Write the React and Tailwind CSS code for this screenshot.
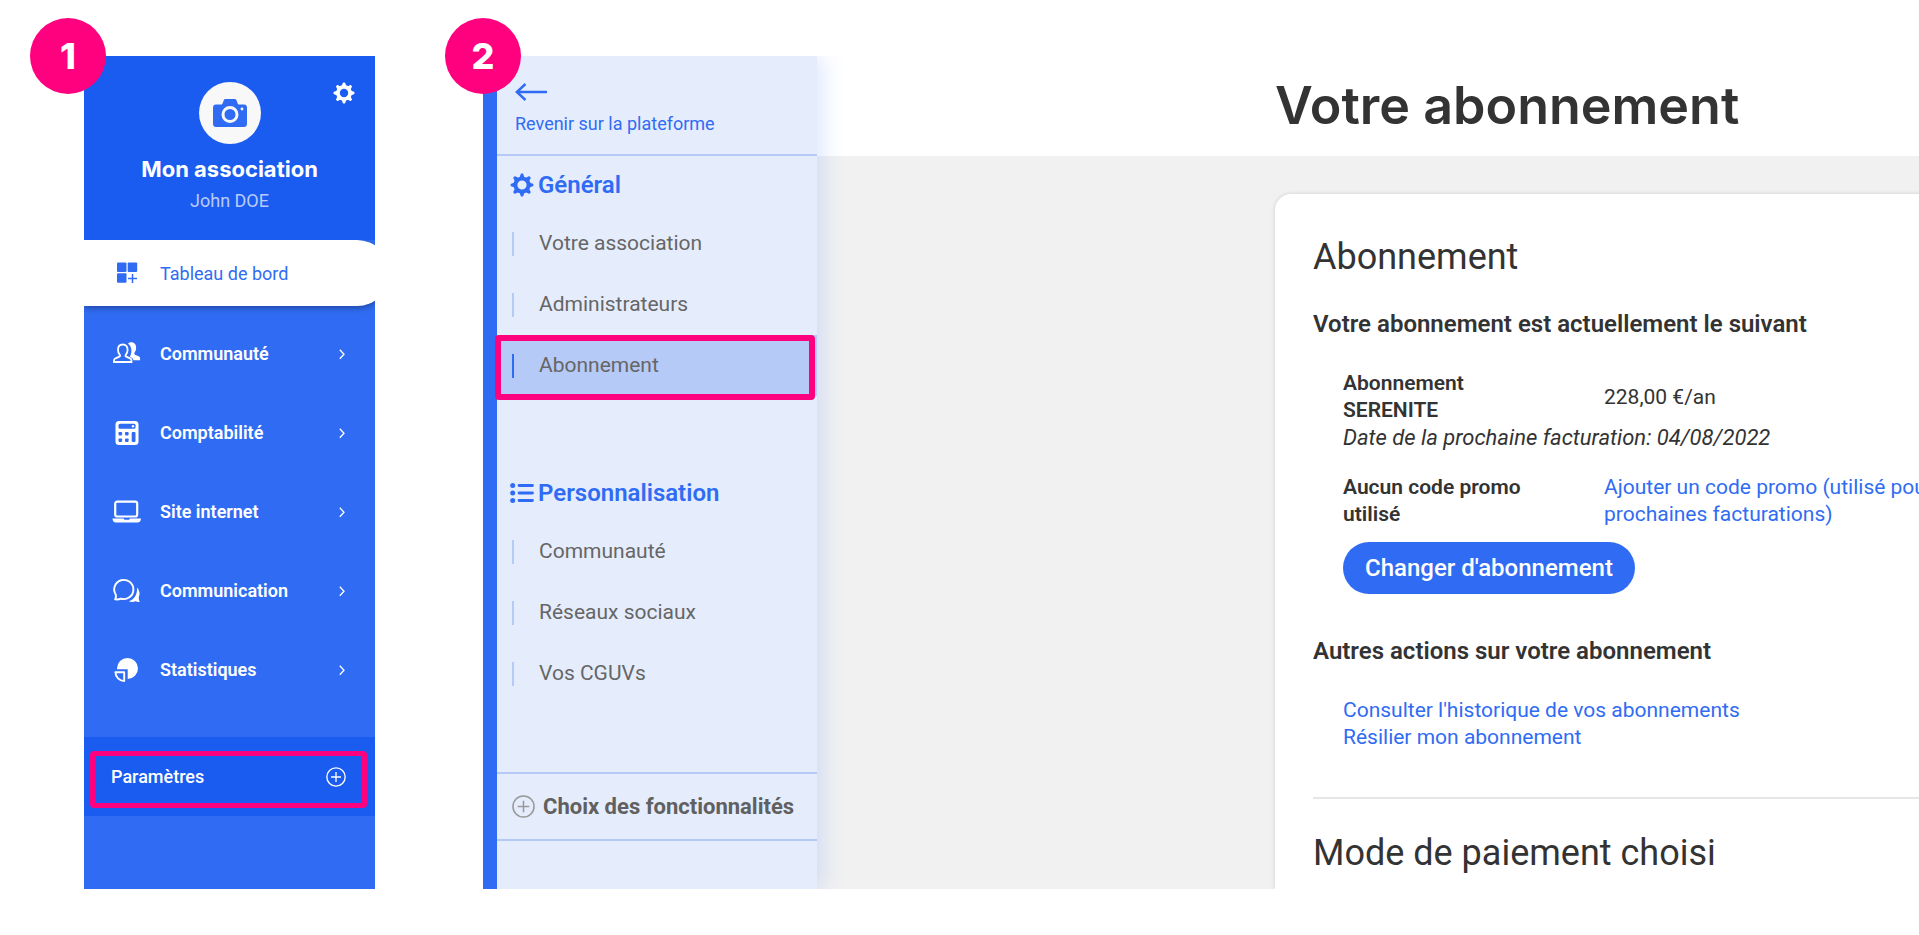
import { clsx } from "clsx";

const TEETH = [0, 45, 90, 135, 180, 225, 270, 315];

function GearIcon({ className }) {
  return (
    <svg viewBox="0 0 24 24" className={className} fill="none" stroke="currentColor" aria-hidden="true">
      <circle cx="12" cy="12" r="6.6" strokeWidth="4" />
      {TEETH.map((angle) => (
        <path
          key={angle}
          d="M10.4 4.4 11.4 1.4h1.2l1 3z"
          fill="currentColor"
          strokeWidth="1.6"
          strokeLinejoin="round"
          transform={`rotate(${angle} 12 12)`}
        />
      ))}
    </svg>
  );
}

function CameraIcon({ className }) {
  return (
    <svg viewBox="0 0 34 28" className={className} aria-hidden="true">
      <path
        fill="currentColor"
        d="M3 5.5h5.2c.8 0 1-.4 1.3-1.100l1.300-3.100C11.100.4 11.700 0 12.500 0h9.300c.8 0 1.400.4 1.700 1.200l1.200 3.200c.3.7.6 1.100 1.300 1.100h5c1.700 0 3 1.300 3 3V25c0 1.700-1.300 3-3 3H3c-1.700 0-3-1.300-3-3V8.500c0-1.700 1.300-3 3-3z"
      />
      <circle cx="17" cy="15.5" r="7" fill="none" stroke="#f8f8f8" strokeWidth="3" />
      <circle cx="29" cy="10" r="1.4" fill="#f8f8f8" />
    </svg>
  );
}

/** 30x26 frame shared by the icons of the main menu. */
function MenuIcon({ children }) {
  return (
    <svg viewBox="0 0 30 26" className="h-[26px] w-[30px] shrink-0" fill="none" stroke="currentColor" aria-hidden="true">
      {children}
    </svg>
  );
}

function DashboardIcon() {
  return (
    <MenuIcon>
      <g fill="currentColor" stroke="none">
        <rect x="5" y="2.5" width="9.5" height="9.5" rx="1" />
        <rect x="15.7" y="2.5" width="9.5" height="9.5" rx="1" />
        <rect x="5" y="13.2" width="9.5" height="9.5" rx="1" />
      </g>
      <path d="M20.5 14v9M16 18.5h9" strokeWidth="1.5" />
    </MenuIcon>
  );
}

function CommunityIcon() {
  return (
    <MenuIcon>
      <path
        d="M16 2.5c1-.9 2.100-1.200 3.200-1.200 3.200 0 4.900 2.400 4.900 5.300 0 2.200-.5 3.800-1.600 5.100-.5.7-.3 1.600.5 2l3.600 1.600c1 .5 1.500 1.200 1.500 2.300v1.600h-6.600c-.3-1.300-1-2.200-2.300-2.800l-1.500-.7c1.100-1.500 1.700-3.600 1.700-6 0-3.100-1.200-5.500-3.400-7.200z"
        fill="currentColor"
        stroke="none"
      />
      <path
        d="M10.8 3.5c-3 0-4.800 2-4.800 5.200 0 2.200.7 3.900 1.800 5.100.6.8.3 1.500-.5 1.900l-3.800 1.600c-1 .5-1.500 1.200-1.500 2.400v1.300h17.500v-1.300c0-1.200-.5-1.900-1.500-2.400l-3.700-1.600c-.9-.4-1.100-1.100-.5-1.900 1.100-1.200 1.800-2.900 1.800-5.100 0-3.200-1.800-5.200-4.800-5.200z"
        strokeWidth="1.8"
      />
    </MenuIcon>
  );
}

function AccountingIcon() {
  return (
    <MenuIcon>
      <rect x="3.5" y="1" width="23" height="24" rx="3.5" fill="currentColor" stroke="none" />
      <g fill="#306cf3" stroke="none">
        <rect x="6.5" y="3.8" width="17" height="5" rx="1.5" />
        <rect x="6.5" y="12" width="3.6" height="3.4" rx=".8" />
        <rect x="13" y="12" width="3.6" height="3.4" rx=".8" />
        <rect x="6.5" y="18.5" width="3.6" height="3.4" rx=".8" />
        <rect x="13" y="18.5" width="3.6" height="3.4" rx=".8" />
        <rect x="19.7" y="12" width="3.8" height="9.9" rx="1" />
      </g>
      <circle cx="21" cy="6.3" r="1.2" fill="currentColor" stroke="none" />
    </MenuIcon>
  );
}

function WebsiteIcon() {
  return (
    <MenuIcon>
      <rect x="3.2" y="2.7" width="22" height="14.8" rx="2" strokeWidth="2.2" />
      <path d="M.5 19.5h11l1 1.200h4.500l1-1.200h11c-.2 2.500-1.300 4-3.500 4H4c-2.200 0-3.400-1.500-3.500-4z" fill="currentColor" stroke="none" />
    </MenuIcon>
  );
}

function CommunicationIcon() {
  return (
    <MenuIcon>
      <path d="M3.2 21.3c.8-1.600.9-2.900.6-4.500a9.600 9.600 0 1 1 5 3.800c-1.700.9-3.600 1-5.600.7z" strokeWidth="1.9" strokeLinejoin="round" />
      <path
        d="M25 9.5c2.700 2.600 3.300 6.600 1.700 9.900 0 1.500.3 3.100 1 4.600-1.500.1-2.900-.2-4.200-.8-2.200.9-4.500.9-6.700.1 5.300-1.600 8.800-6.900 8.200-13.800z"
        fill="currentColor"
        stroke="none"
      />
    </MenuIcon>
  );
}

function StatsIcon() {
  return (
    <MenuIcon>
      <path d="M5 11.5A10.5 10.5 0 1 1 15.7 22V12.300H5z" fill="currentColor" stroke="none" />
      <path d="M3.4 15.300h8.800v8.800c-4.900-.2-8.600-4-8.800-8.800z" strokeWidth="1.9" strokeLinejoin="round" />
    </MenuIcon>
  );
}

function CirclePlusIcon({ className }) {
  return (
    <svg viewBox="0 0 24 24" className={className} fill="none" stroke="currentColor" strokeWidth="1.6" aria-hidden="true">
      <circle cx="12" cy="12" r="11" />
      <path d="M12 6v12M6 12h12" />
    </svg>
  );
}

function ListIcon({ className }) {
  return (
    <svg viewBox="0 0 24 22" className={className} fill="none" stroke="currentColor" strokeWidth="2.8" strokeLinecap="round" aria-hidden="true">
      <path d="M9 3.500h13.500M9 11h13.500M9 18.500h13.500" />
      <g fill="currentColor" stroke="none">
        <circle cx="2.7" cy="3.5" r="2.5" />
        <circle cx="2.7" cy="11" r="2.5" />
        <circle cx="2.7" cy="18.5" r="2.5" />
      </g>
    </svg>
  );
}

function StepBadge({ children, className }) {
  return (
    <span
      className={clsx(
        "absolute -top-[38px] z-20 flex size-[76px] items-center justify-center rounded-full bg-[#ff007f] font-['Inter',sans-serif] text-[36px] font-extrabold text-white",
        className
      )}
    >
      {children}
    </span>
  );
}

const MENU = [
  { label: "Communauté", icon: CommunityIcon },
  { label: "Comptabilité", icon: AccountingIcon },
  { label: "Site internet", icon: WebsiteIcon },
  { label: "Communication", icon: CommunicationIcon },
  { label: "Statistiques", icon: StatsIcon },
];

function MainMenu() {
  return (
    <section className="relative flex w-[291px] shrink-0">
      <StepBadge className="-left-[54px]">1</StepBadge>
      <div className="flex flex-1 flex-col overflow-hidden bg-[#306cf3] text-white">
        <header className="relative flex h-[184px] shrink-0 flex-col items-center bg-[#1a5bf0] pt-[26px]">
          <div className="flex size-[62px] items-center justify-center rounded-full bg-[#f8f8f8] text-[#306cf3]">
            <CameraIcon className="h-7 w-[34px]" />
          </div>
          <button type="button" aria-label="Réglages" className="absolute top-[26px] right-5">
            <GearIcon className="size-[22px]" />
          </button>
          <h2 className="mt-[11px] font-['Inter',sans-serif] text-[22px] leading-7 font-bold">Mon association</h2>
          <p className="mt-[6px] text-[18px] leading-6 text-white/70">John DOE</p>
        </header>
        <nav className="flex flex-col">
          <a
            href="#tableau"
            className="-mr-[15px] flex h-[66px] items-center gap-[18px] rounded-r-full bg-white pl-7 text-[18px] text-[#306cf3] shadow-[0_2px_6px_rgba(0,0,0,0.35)]"
          >
            <DashboardIcon />
            Tableau de bord
          </a>
          <div className="mt-2 flex flex-col">
            {MENU.map(({ label, icon: Icon }) => (
              <a key={label} href="#menu" className="flex h-[79px] items-center gap-[18px] pr-[30px] pl-7 text-[18px] font-semibold">
                <Icon />
                {label}
                <svg viewBox="0 0 6 12" className="ml-auto h-3 w-[6px]" fill="none" stroke="currentColor" strokeWidth="1.3" aria-hidden="true">
                  <path d="M.8 1.800 5 6.300.8 10.800" />
                </svg>
              </a>
            ))}
          </div>
        </nav>
        <button type="button" className="relative mt-7 flex h-[79px] items-center justify-between bg-[#1a5bf0] pr-[29px] pl-[27px] text-[18px] font-medium">
          Paramètres
          <CirclePlusIcon className="size-5" />
          <span className="absolute top-[14px] right-2 bottom-2 left-[6px] rounded-sm border-[5px] border-[#ff007f]" />
        </button>
      </div>
    </section>
  );
}

function SettingsGroup({ title, icon, items, active }) {
  return (
    <div>
      <h3 className="flex h-7 items-center gap-1 pl-[13px] text-[24px] leading-7 font-semibold text-[#306cf3]">
        {icon}
        {title}
      </h3>
      <ul className="mt-[14px]">
        {items.map((item) => (
          <li key={item}>
            <a
              href="#reglage"
              className={clsx(
                "relative flex h-[61px] items-center gap-[25px] pl-[15px] text-[21px] text-[#666]",
                item === active && "bg-[#b6caf7]"
              )}
            >
              <span className={clsx("h-6 w-[2px]", item === active ? "bg-[#306cf3]" : "bg-[#b6caf7]")} />
              {item}
              {item === active && (
                <span className="absolute top-0 right-[2px] -bottom-1 -left-[2px] rounded-sm border-[6px] border-[#ff007f]" />
              )}
            </a>
          </li>
        ))}
      </ul>
    </div>
  );
}

function SettingsSidebar() {
  return (
    <aside className="z-10 flex w-[334px] shrink-0 flex-col border-l-[14px] border-[#306cf3] bg-[#e5edfd] shadow-[6px_0_20px_rgba(48,108,243,0.16)]">
      <a href="#plateforme" className="flex h-[100px] flex-col border-b-2 border-[#b6caf7] pt-[27px] pl-[18px] text-[18px] leading-6 text-[#306cf3]">
        <svg viewBox="0 0 32 18" className="h-[18px] w-8" fill="none" stroke="currentColor" strokeWidth="2.4" aria-hidden="true">
          <path d="M10.500 1 1.800 9l8.700 8M2 9h30" />
        </svg>
        <span className="mt-[11px]">Revenir sur la plateforme</span>
      </a>
      <div className="flex flex-col gap-[83px] pt-[15px] pb-[68px]">
        <SettingsGroup
          title="Général"
          icon={<GearIcon className="size-6" />}
          items={["Votre association", "Administrateurs", "Abonnement"]}
          active="Abonnement"
        />
        <SettingsGroup
          title="Personnalisation"
          icon={<ListIcon className="h-[22px] w-6" />}
          items={["Communauté", "Réseaux sociaux", "Vos CGUVs"]}
        />
      </div>
      <button type="button" className="flex h-[69px] items-center gap-2 border-y-2 border-[#b6caf7] pl-[15px] text-[22px] font-bold whitespace-nowrap text-[#606060]">
        <CirclePlusIcon className="size-[23px] text-[#999]" />
        Choix des fonctionnalités
      </button>
    </aside>
  );
}

function SubscriptionPage() {
  return (
    <main className="flex min-w-0 flex-1 flex-col overflow-hidden bg-[#f1f1f1] pl-[458px] text-[#333]">
      <header className="-ml-[458px] flex h-[100px] shrink-0 items-center bg-white pl-[458px]">
        <h1 className="font-['Inter',sans-serif] text-[52px] leading-[60px] font-semibold whitespace-nowrap">Votre abonnement</h1>
      </header>
      <div className="mt-[38px] w-[900px] flex-1 rounded-tl-[16px] bg-white px-[38px] pt-[41px] pb-3 shadow-[0_0_4px_rgba(0,0,0,0.15)]">
        <h2 className="text-[36px] leading-[44px]">Abonnement</h2>
        <h3 className="mt-[31px] text-[24px] leading-7 font-semibold">Votre abonnement est actuellement le suivant</h3>
        <div className="mt-8 pl-[30px] text-[21px] leading-[27px]">
          <table className="w-[700px] table-fixed text-left">
            <tbody>
              <tr>
                <th className="w-[261px] pr-[50px] font-semibold">Abonnement SERENITE</th>
                <td>228,00 €/an</td>
              </tr>
              <tr>
                <td colSpan={2} className="pb-[23px] text-[22px] italic">
                  Date de la prochaine facturation: 04/08/2022
                </td>
              </tr>
              <tr>
                <th className="pr-[50px] font-semibold">Aucun code promo utilisé</th>
                <td>
                  <a href="#promo" className="text-[#306cf3]">
                    Ajouter un code promo (utilisé pour vos prochaines facturations)
                  </a>
                </td>
              </tr>
            </tbody>
          </table>
          <button type="button" className="mt-[14px] h-[52px] rounded-full bg-[#306cf3] px-[22px] text-[24px] font-medium text-white">
            Changer d'abonnement
          </button>
        </div>
        <h3 className="mt-[43px] text-[24px] leading-7 font-semibold">Autres actions sur votre abonnement</h3>
        <ul className="mt-8 pl-[30px] text-[21px] leading-[27px] text-[#306cf3]">
          <li>
            <a href="#historique">Consulter l'historique de vos abonnements</a>
          </li>
          <li>
            <a href="#resilier">Résilier mon abonnement</a>
          </li>
        </ul>
        <hr className="mt-[46px] border-t-2 border-[#e6e6e6]" />
        <h2 className="mt-8 text-[36px] leading-[44px]">Mode de paiement choisi</h2>
      </div>
    </main>
  );
}

export default function App() {
  return (
    <div className="flex min-h-screen gap-[108px] overflow-hidden bg-white pt-14 pb-[46px] pl-[84px] font-['Roboto',sans-serif]">
      <MainMenu />
      <section className="relative flex min-w-0 flex-1">
        <StepBadge className="-left-[38px]">2</StepBadge>
        <div className="flex min-w-0 flex-1 overflow-hidden">
          <SettingsSidebar />
          <SubscriptionPage />
        </div>
      </section>
    </div>
  );
}
